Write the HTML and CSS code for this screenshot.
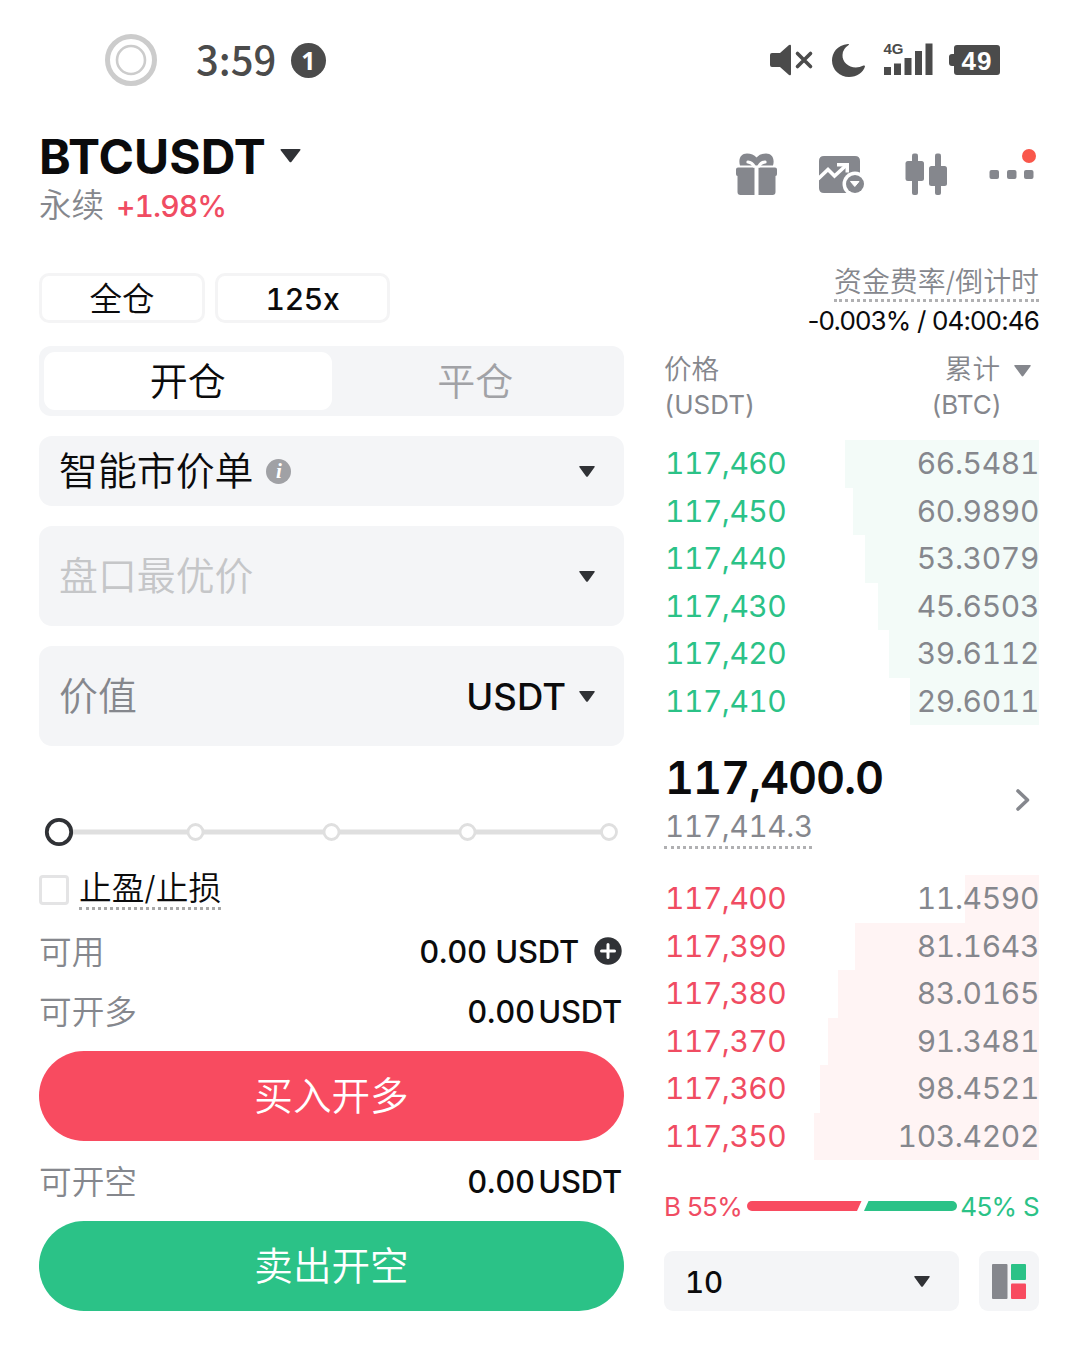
FILE: index.html
```html
<!DOCTYPE html>
<html lang="zh-CN">
<head>
    <meta charset="UTF-8">
    <meta name="viewport" content="width=device-width, initial-scale=1.0">
    <title>BTCUSDT 永续</title>
    <link rel="stylesheet" href="styles.css">
</head>
<body>
    <!-- 状态栏 -->
    <div class="status">
        <svg class="ring" width="52" height="52" viewBox="0 0 52 52" fill="none" stroke="#cccccc">
            <circle cx="26" cy="26" r="23.5" stroke-width="5"/>
            <circle cx="26" cy="26" r="14" stroke-width="2.6"/>
        </svg>
        <span class="time">3:59</span>
        <span class="count">1</span>
        <svg class="statusIcons" width="232" height="40" viewBox="768 40 232 40" fill="#4b4b4b">
            <path d="M772 53h8l9-8q2-1 2 1v28q0 2-2 1l-9-8h-8q-2 0-2-2V55q0-2 2-2z"/>
            <path d="M797.500 53.500l13 13M810.500 53.500l-13 13" stroke="#4b4b4b" stroke-width="3.600" stroke-linecap="round"/>
            <path d="M848 44C837 45 832 53 832 60.500C832 70 840 77 849 77C857 77 863 72.500 865 66.500Q865 65 863.500 65.500C853 71 842 64 842.500 55Q842.500 49 849 44.800Q849.500 44 848 44z"/>
            <text x="883.500" y="53.500" class="net">4G</text>
            <path d="M884 67h7v8h-7zM894 63.500h7v11.500h-7zM904.500 58h7v17h-7zM915 51h7v24h-7zM925.500 43.500h7v31.500h-7z"/>
            <path d="M957 45h40q3 0 3 3v24q0 3-3 3h-40q-3 0-3-3v-6h-2q-3 0-3-3v-6q0-3 3-3h2v-6q0-3 3-3z"/>
            <text x="977" y="69.500" class="battery">49</text>
        </svg>
    </div>

    <!-- 交易对 -->
    <div class="header">
        <div class="pair">
            <div class="pairName">BTCUSDT
                <svg width="21" height="14" viewBox="0 0 22 15" fill="#303236"><path d="M1.500 0h19q2 0 .8 1.600l-9.200 12q-1.100 1.300-2.200 0L.7 1.600Q-.500 0 1.500 0z"/></svg>
            </div>
            <div class="pairInfo"><span>永续</span><b>+1.98%</b></div>
        </div>
        <svg width="310" height="60" viewBox="730 145 310 60" fill="#85878d">
            <!-- 礼物 -->
            <path d="M740 165.500c-2-7 1-12 7-12q6 0 9.500 4q3.500-4 9.500-4c6 0 9 5 7 12z"/>
            <path d="M738 167.500h16.500v27.500h-14q-3 0-3-3v-16q-1.500 0-1.500-2v-4.500q0-2 2-2zM758.500 167.500h16.500q2 0 2 2v4.500q0 2-1.500 2v16q0 3-3 3h-14z"/>
            <path d="M748 162q4 .5 6 4M765 162q-4 .5-6 4" fill="none" stroke="#fff" stroke-width="3.200" stroke-linecap="round"/>
            <!-- 行情 -->
            <path d="M824 156h31q5 0 5 5v27q0 5-5 5h-31q-5 0-5-5v-27q0-5 5-5z"/>
            <path d="M818 179l10-9.500l6.500 6.500l12-11" fill="none" stroke="#fff" stroke-width="3.600"/>
            <path d="M837 163h12v9.500h-3.500v-6h-8.500z" fill="#fff"/>
            <circle cx="855" cy="184" r="12.500" fill="#fff"/>
            <circle cx="855" cy="184" r="9"/>
            <path d="M850.500 181.500h8.500l-4.200 5z" fill="#fff" stroke="#fff" stroke-linejoin="round"/>
            <!-- K线 -->
            <rect x="912" y="153.500" width="6" height="41.500" rx="2"/>
            <rect x="905.500" y="161" width="18.500" height="20" rx="2.500"/>
            <rect x="935" y="153.500" width="6" height="41.500" rx="2"/>
            <rect x="929" y="166" width="18" height="20" rx="2.500"/>
            <!-- 更多 -->
            <rect x="989.500" y="170" width="9.500" height="9" rx="2"/>
            <rect x="1007" y="170" width="9.500" height="9" rx="2"/>
            <rect x="1024" y="170" width="9.500" height="9" rx="2"/>
            <circle cx="1029" cy="156" r="7" fill="#f9574b"/>
        </svg>
    </div>

    <div class="main">
        <!-- 下单区 -->
        <div class="order">
            <div class="chips">
                <span class="chip">全仓</span>
                <span class="chip lever">125x</span>
            </div>
            <div class="tabs">
                <span class="tab active">开仓</span>
                <span class="tab">平仓</span>
            </div>
            <div class="field short">
                <span>智能市价单</span>
                <i class="info">i</i>
                <svg class="arrow" width="16" height="11" viewBox="0 0 16 11"><path d="M1 0h14q1.500 0 .5 1.200l-6.500 9q-1 1.200-2 0L.5 1.200Q-.500 0 1 0z"/></svg>
            </div>
            <div class="field">
                <span class="placeholder">盘口最优价</span>
                <svg class="arrow" width="16" height="11" viewBox="0 0 16 11"><path d="M1 0h14q1.500 0 .5 1.200l-6.500 9q-1 1.200-2 0L.5 1.200Q-.500 0 1 0z"/></svg>
            </div>
            <div class="field">
                <span class="label">价值</span>
                <span class="unit">USDT</span>
                <svg class="arrow" width="16" height="11" viewBox="0 0 16 11"><path d="M1 0h14q1.500 0 .5 1.200l-6.500 9q-1 1.200-2 0L.5 1.200Q-.500 0 1 0z"/></svg>
            </div>
            <svg class="slider" width="585" height="30" viewBox="39 817 585 30" fill="#fff" stroke="#dfdfdf" stroke-width="2.800">
                <path d="M60 832h549" stroke-width="5"/>
                <circle cx="195.500" cy="832" r="7.500"/>
                <circle cx="331.500" cy="832" r="7.500"/>
                <circle cx="467.500" cy="832" r="7.500"/>
                <circle cx="609" cy="832" r="7.500"/>
                <circle cx="59" cy="832" r="12.200" stroke="#303236" stroke-width="3.800"/>
            </svg>
            <div class="stop">
                <span class="checkbox"></span>
                <span class="stopText">止盈/止损</span>
            </div>
            <div class="row">
                <span>可用</span>
                <b>0.00 <em>USDT</em></b>
                <svg class="plus" width="28" height="28" viewBox="0 0 28 28"><circle cx="14" cy="14" r="13.700" fill="#303236"/><path d="M14 7.500v13M7.500 14h13" stroke="#fff" stroke-width="3" stroke-linecap="round"/></svg>
            </div>
            <div class="row tight">
                <span>可开多</span>
                <b>0.00 <em>USDT</em></b>
            </div>
            <div class="btn buy">买入开多</div>
            <div class="row tight last">
                <span>可开空</span>
                <b>0.00 <em>USDT</em></b>
            </div>
            <div class="btn sell">卖出开空</div>
        </div>

        <!-- 盘口 -->
        <div class="book">
            <div class="rateTitle"><span>资金费率/倒计时</span></div>
            <div class="rate">-0.003% / 04:00:46</div>
            <div class="bookHead">
                <div>价格<br><small>(USDT)</small></div>
                <div class="total">累计<br><small>(BTC)</small></div>
                <svg width="17" height="12" viewBox="0 0 17 12" fill="#85878d"><path d="M1 0h15q1.500 0 .5 1.300l-7 9.500q-1 1.200-2 0L.5 1.300Q-.500 0 1 0z"/></svg>
            </div>
            <div class="list green">
                <div style="background-size:194px 100%"><span>117,460</span><span>66.5481</span></div>
                <div style="background-size:186px 100%"><span>117,450</span><span>60.9890</span></div>
                <div style="background-size:174px 100%"><span>117,440</span><span>53.3079</span></div>
                <div style="background-size:161px 100%"><span>117,430</span><span>45.6503</span></div>
                <div style="background-size:150px 100%"><span>117,420</span><span>39.6112</span></div>
                <div style="background-size:129px 100%"><span>117,410</span><span>29.6011</span></div>
            </div>
            <div class="price">
                <div>
                    <div class="lastPrice">117,400.0</div>
                    <span class="markPrice">117,414.3</span>
                </div>
                <svg width="16" height="24" viewBox="0 0 16 24" fill="none" stroke="#85878d" stroke-width="3.600" stroke-linecap="round" stroke-linejoin="round"><path d="M3 3l9.500 9L3 21"/></svg>
            </div>
            <div class="list red">
                <div style="background-size:74px 100%"><span>117,400</span><span>11.4590</span></div>
                <div style="background-size:184px 100%"><span>117,390</span><span>81.1643</span></div>
                <div style="background-size:201px 100%"><span>117,380</span><span>83.0165</span></div>
                <div style="background-size:211px 100%"><span>117,370</span><span>91.3481</span></div>
                <div style="background-size:219px 100%"><span>117,360</span><span>98.4521</span></div>
                <div style="background-size:225px 100%"><span>117,350</span><span>103.4202</span></div>
            </div>
            <div class="ratio">
                <span class="b">B 55%</span>
                <svg width="210" height="10" viewBox="0 0 210 10">
                    <path d="M5 0h109.500l-4.500 10H5a5 5 0 0 1 0-10z" fill="#f84b60"/>
                    <path d="M121.500 0H205a5 5 0 0 1 0 10h-88z" fill="#2bc287"/>
                </svg>
                <span class="s">45% S</span>
            </div>
            <div class="bottom">
                <div class="step"><span>10</span>
                    <svg class="arrow" width="16" height="11" viewBox="0 0 16 11"><path d="M1 0h14q1.500 0 .5 1.200l-6.500 9q-1 1.200-2 0L.5 1.200Q-.500 0 1 0z"/></svg>
                </div>
                <div class="layout">
                    <svg width="34" height="35" viewBox="0 0 34 35">
                        <rect width="15.500" height="35" rx="1" fill="#85878d"/>
                        <rect x="19" width="15" height="16" rx="1" fill="#2bc287"/>
                        <rect x="19" y="19.500" width="15" height="15.500" rx="1" fill="#f84b60"/>
                    </svg>
                </div>
            </div>
        </div>
    </div>
</body>
</html>
```
FILE: styles.css
```css
*{
    box-sizing: border-box;
}
body{
    margin: 0;
    width: 1079px;
    height: 1360px;
    overflow: hidden;
    background-color: #fff;
    color: #0b0b0c;
    font-family: Inter,"Noto Sans CJK SC",sans-serif;
    font-feature-settings: "tnum";
}
svg{
    display: block;
    flex: none;
}
b,em,i{
    font-style: normal;
    font-weight: 500;
}
/* 状态栏 */
.status{
    display: flex;
    align-items: center;
    height: 120px;
    padding: 0 79px 0 105px;
    color: #4b4b4b;
}
.time{
    width: 80px;
    margin-left: 39px;
    padding-bottom: 5px;
    font: 500 40px/52px "Noto Sans CJK SC",sans-serif;
    white-space: nowrap;
}
.count{
    width: 35px;
    height: 35px;
    margin-left: 15px;
    border-radius: 50%;
    background-color: #4b4b4b;
    color: #fff;
    font: 700 25px/34px "Noto Sans",sans-serif;
    text-align: center;
}
.statusIcons{
    margin-left: auto;
}
.net{
    font: 700 15px "Liberation Sans",sans-serif;
}
.battery{
    font: 700 26px "Liberation Sans",sans-serif;
    text-anchor: middle;
    letter-spacing: 1px;
    fill: #fff;
}
/* 头部 */
.header{
    display: flex;
    justify-content: space-between;
    height: 140px;
    padding: 9px 39px 0 39px;
}
.header>svg{
    margin-top: 16px;
}
.pairName{
    display: flex;
    align-items: center;
    gap: 14px;
    height: 54px;
    font-size: 48px;
    font-weight: 700;
}
.pairInfo{
    display: flex;
    align-items: center;
    gap: 12px;
    height: 44px;
    color: #85878d;
    font-size: 32.5px;
    font-weight: 350;
}
.pairInfo span{
    padding-bottom: 5px;
}
.pairInfo b{
    padding-top: 2px;
    color: #f04c62;
    font-size: 30px;
    letter-spacing: -.9px;
}
/* 主体 */
.main{
    display: grid;
    grid-template-columns: 585px 375px;
    column-gap: 40px;
    padding-left: 39px;
}
.order{
    padding-top: 13px;
}
.chips{
    display: flex;
    gap: 10px;
}
.chip{
    width: 166px;
    height: 50px;
    border: 3px solid #f4f4f5;
    border-radius: 10px;
    font-size: 32.5px;
    font-weight: 350;
    line-height: 47px;
    text-align: center;
}
.chip.lever{
    width: 175px;
    font-size: 30px;
    font-weight: 500;
    letter-spacing: -.3px;
    line-height: 46px;
}
.tabs{
    display: flex;
    height: 70px;
    margin: 23px 0 20px;
    padding: 6px 5px;
    border-radius: 12px;
    background-color: #f4f5f7;
}
.tab{
    flex: 1;
    border-radius: 11px;
    color: #a1a2a6;
    font-size: 38px;
    font-weight: 350;
    line-height: 58px;
    text-align: center;
}
.tab.active{
    background-color: #fff;
    color: #0b0b0c;
}
.field{
    display: flex;
    align-items: center;
    height: 100px;
    margin-bottom: 20px;
    padding: 0 29px 0 20px;
    border-radius: 13px;
    background-color: #f4f5f7;
    font-size: 38.9px;
    font-weight: 350;
}
.field span:first-child{
    padding-bottom: 6px;
}
.field.short{
    height: 70px;
}
.arrow{
    margin-left: auto;
    fill: #303236;
}
.info{
    width: 25px;
    height: 25px;
    margin-left: 13px;
    border-radius: 50%;
    background-color: #a0a1a5;
    color: #fff;
    font: italic 700 21px/25px "Liberation Serif",serif;
    text-align: center;
}
.placeholder{
    color: #c5c6c8;
}
.label{
    color: #85878d;
}
.unit{
    margin-left: auto;
    padding-top: 2px;
    font-size: 36.5px;
    font-weight: 500;
}
.unit+.arrow{
    margin-left: 13px;
}
.slider{
    margin-top: 71px;
}
.stop{
    display: flex;
    height: 74px;
    padding-top: 22px;
}
.checkbox{
    width: 30px;
    height: 30px;
    margin: 6px 10px 0 0;
    border: 3px solid #e4e4e5;
    border-radius: 4px;
}
.stopText{
    height: 41px;
    border-bottom: 3px dotted #a8a8a8;
    font-size: 32.7px;
    font-weight: 350;
    line-height: 38px;
}
.row{
    display: flex;
    align-items: center;
    height: 60px;
    padding-right: 2px;
    color: #85878d;
    font-size: 32.7px;
    font-weight: 350;
}
.row span{
    padding-bottom: 4px;
}
.row b{
    margin-left: auto;
    padding-top: 1px;
    color: #0b0b0c;
    font-size: 31px;
    letter-spacing: -.2px;
}
.row.tight b{
    word-spacing: -5px;
}
.row.last{
    height: 80px;
}
.plus{
    margin-left: 15px;
}
.btn{
    height: 90px;
    border-radius: 45px;
    color: #fff;
    font-size: 38.6px;
    font-weight: 350;
    line-height: 91px;
    text-align: center;
}
.buy{
    margin-top: 10px;
    background-color: #f84b60;
}
.sell{
    background-color: #2bc287;
}
/* 盘口 */
.rateTitle{
    display: flex;
    justify-content: flex-end;
    color: #85878d;
    font-size: 27.9px;
    font-weight: 350;
    line-height: 44px;
}
.rateTitle span{
    height: 42px;
    border-bottom: 3px dotted #b0b0b2;
}
.rate{
    height: 38px;
    font-size: 26px;
    font-feature-settings: normal;
    letter-spacing: -.85px;
    line-height: 38px;
    text-align: right;
    white-space: nowrap;
}
.bookHead{
    display: flex;
    height: 100px;
    padding: 12px 9px 0 0;
    color: #85878d;
    font-size: 27.6px;
    font-weight: 350;
    line-height: 35px;
}
.bookHead small{
    font-size: 26px;
    font-weight: 400;
    line-height: 33px;
}
.total{
    margin-left: auto;
    text-align: right;
}
.total small{
    margin-right: -2px;
}
.bookHead svg{
    margin: 13px -1px 0 14px;
}
.list div{
    display: flex;
    justify-content: space-between;
    height: 47.5px;
    padding-left: 1px;
    background-repeat: no-repeat;
    background-position: right top;
    font-size: 30px;
    letter-spacing: -.5px;
    line-height: 47.5px;
}
.list span+span{
    color: #85878d;
    letter-spacing: -.35px;
}
.green{
    color: #2bc287;
}
.green div{
    background-image: linear-gradient(#f3fbf8,#f3fbf8);
}
.red{
    color: #f04c62;
}
.red div{
    background-image: linear-gradient(#fff4f4,#fff4f4);
}
.price{
    display: flex;
    justify-content: space-between;
    align-items: center;
    height: 150px;
    padding: 0 8px 0 0;
}
.lastPrice{
    height: 54px;
    padding-left: 1px;
    font-size: 45px;
    font-weight: 600;
    letter-spacing: -1.1px;
    line-height: 52px;
}
.markPrice{
    display: block;
    width: 148px;
    height: 43px;
    padding-left: 1px;
    border-bottom: 3px dotted #b0b0b2;
    color: #85878d;
    font-size: 29.500px;
    letter-spacing: -.2px;
    line-height: 41px;
}
.ratio{
    display: flex;
    align-items: center;
    height: 93px;
    margin-bottom: -2px;
    font-size: 26px;
    font-feature-settings: normal;
    letter-spacing: -.7px;
    white-space: nowrap;
}
.ratio svg{
    margin-bottom: 2px;
}
.b{
    width: 83px;
    color: #f04c62;
}
.s{
    margin-left: auto;
    color: #2bc287;
}
.bottom{
    display: flex;
    gap: 20px;
}
.step{
    display: flex;
    align-items: center;
    width: 295px;
    height: 60px;
    padding: 0 29px 0 21px;
    border-radius: 9px;
    background-color: #f4f5f7;
    font-size: 29.500px;
    font-weight: 500;
}
.step span{
    padding-top: 2px;
}
.layout{
    display: flex;
    align-items: center;
    justify-content: center;
    width: 60px;
    height: 60px;
    border-radius: 9px;
    background-color: #f4f5f7;
}
```
